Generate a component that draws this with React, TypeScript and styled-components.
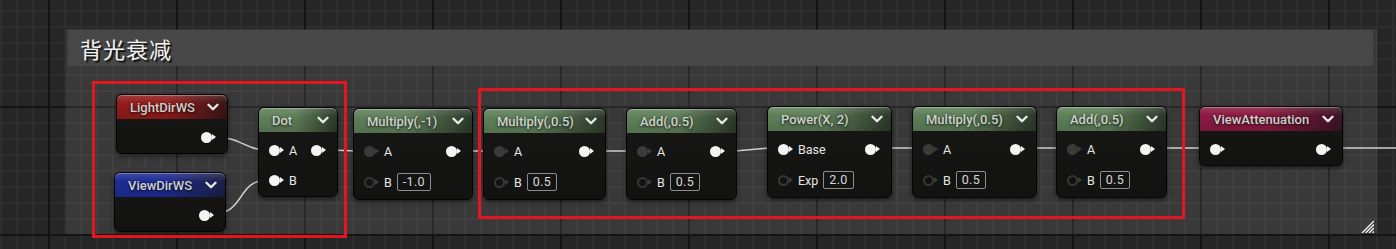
import React from 'react';
import styled, { createGlobalStyle } from 'styled-components';
import { ChevronDown } from 'lucide-react';

const GlobalStyle = createGlobalStyle`
  html, body {
    margin: 0;
    background: #262626;
    overflow: hidden;
  }
`;

type Tint = 'red' | 'blue' | 'green' | 'plum';
type PinKind = 'live' | 'dim' | 'empty';

const tints: Record<Tint, [string, string]> = {
  red: ['#931c1c', '#3a1515'],
  blue: ['#1f2d94', '#1b1f44'],
  green: ['#5f7f59', '#2b3829'],
  plum: ['#8c1a43', '#3a1422'],
};

const Canvas = styled.div`
  position: relative;
  width: 1396px;
  height: 249px;
  overflow: hidden;
  font-family: Roboto, 'Liberation Sans', sans-serif;
  background-color: #262626;
  background-image:
    linear-gradient(90deg, #141414 2px, transparent 2px),
    linear-gradient(180deg, #141414 2px, transparent 2px),
    linear-gradient(90deg, #2e2e2e 2px, transparent 2px),
    linear-gradient(180deg, #2e2e2e 2px, transparent 2px);
  background-size: 128px 100%, 100% 128px, 16px 100%, 100% 16px;
  background-position: 48px 0, 0 106px, 0 0, 0 10px;
`;

/* comment frame around the group of nodes */
const Comment = styled.div`
  position: absolute;
  left: 66px;
  top: 29px;
  width: 1311px;
  height: 205px;
  display: flex;
  flex-direction: column;
  background: rgba(255, 255, 255, 0.09);
`;

const CommentHeader = styled.div`
  height: 36px;
  margin: 1px 4px 0 2px;
  padding-left: 12px;
  display: flex;
  align-items: center;
  background: #474747;
  color: #f2f2f2;
  font-family: 'Noto Sans CJK SC', 'Noto Sans', sans-serif;
  font-size: 22px;
  letter-spacing: 1px;
  text-shadow: 2px 2px 1px rgba(0, 0, 0, 0.75);
`;

const Grip = styled.svg`
  margin-top: auto;
  margin-right: 3px;
  margin-bottom: 1px;
  align-self: flex-end;
`;

const Wires = styled.svg`
  position: absolute;
  left: 0;
  top: 0;
  pointer-events: none;
`;

const Node = styled.div<{ $x: number; $y: number; $w: number }>`
  position: absolute;
  left: ${p => p.$x}px;
  top: ${p => p.$y}px;
  width: ${p => p.$w}px;
  border-radius: 6px;
  border: 1px solid #050505;
  background: linear-gradient(180deg, #171816 0%, #121311 100%);
  box-shadow: 0 2px 5px rgba(0, 0, 0, 0.55);
  box-sizing: border-box;
`;

const NodeHeader = styled.div<{ $tint: Tint }>`
  height: 24px;
  display: flex;
  align-items: center;
  justify-content: space-between;
  padding: 0 5px 0 13px;
  border-radius: 5px 5px 0 0;
  background:
    linear-gradient(180deg, rgba(255, 255, 255, 0.14) 0%, rgba(255, 255, 255, 0) 35%, rgba(0, 0, 0, 0.12) 100%),
    linear-gradient(90deg, ${p => tints[p.$tint][0]} 0%, ${p => tints[p.$tint][0]} 45%, ${p => tints[p.$tint][1]} 100%);
  box-shadow: inset 0 1px 0 rgba(255, 255, 255, 0.3);
`;

const NodeTitle = styled.span`
  color: #ccd1cb;
  font-size: 13px;
  font-weight: 500;
  white-space: nowrap;
  text-shadow: 0 1px 3px rgba(0, 0, 0, 0.85);
`;

const NodeBody = styled.div`
  display: flex;
  flex-direction: column;
  gap: 10px;
  padding: 8px 0 6px;
`;

const PinRow = styled.div<{ $tall: boolean }>`
  height: ${p => (p.$tall ? 22 : 20)}px;
  display: flex;
  align-items: center;
  padding: 0 11px 0 10px;
`;

const Pin = styled.span<{ $out?: boolean }>`
  display: inline-flex;
  align-items: center;
  margin-left: ${p => (p.$out ? 'auto' : '0')};
`;

const pinColour = (k: PinKind) => (k === 'live' ? '#f4f4f4' : '#3b3b3b');

const PinDot = styled.span<{ $kind: PinKind }>`
  width: 11px;
  height: 11px;
  border-radius: 50%;
  box-sizing: border-box;
  background: ${p => (p.$kind === 'empty' ? '#121311' : pinColour(p.$kind))};
  border: ${p => (p.$kind === 'empty' ? '2px solid #363636' : 'none')};
`;

const PinArrow = styled.span<{ $kind: PinKind }>`
  width: 0;
  height: 0;
  border-top: 3px solid transparent;
  border-bottom: 3px solid transparent;
  border-left: 4px solid ${p => pinColour(p.$kind)};
`;

const PinLabel = styled.span`
  margin-left: 5px;
  color: #e6e6e6;
  font-size: 12.5px;
`;

const ValueBox = styled.span`
  margin-left: 5px;
  height: 18px;
  padding: 0 5px;
  box-sizing: border-box;
  border: 1px solid #8e8e8e;
  border-radius: 2px;
  color: #d8d8d8;
  font-size: 12.5px;
  line-height: 16px;
  letter-spacing: 0.3px;
`;

const Highlight = styled.div<{ $x: number; $y: number; $w: number; $h: number }>`
  position: absolute;
  left: ${p => p.$x}px;
  top: ${p => p.$y}px;
  width: ${p => p.$w}px;
  height: ${p => p.$h}px;
  border: 3px solid #e3161f;
  box-sizing: border-box;
`;

interface Row {
  pin?: PinKind;
  label?: string;
  value?: string;
  out?: boolean;
}

interface NodeData {
  title: string;
  tint: Tint;
  x: number;
  y: number;
  w: number;
  rows: Row[];
}

const binary = (b: string): Row[] => [
  { pin: 'dim', label: 'A', out: true },
  { pin: 'empty', label: 'B', value: b },
];

const nodes: NodeData[] = [
  { title: 'LightDirWS', tint: 'red', x: 116, y: 94, w: 112, rows: [{ out: true }] },
  { title: 'ViewDirWS', tint: 'blue', x: 114, y: 172, w: 112, rows: [{ out: true }] },
  {
    title: 'Dot', tint: 'green', x: 258, y: 107, w: 80,
    rows: [{ pin: 'live', label: 'A', out: true }, { pin: 'live', label: 'B' }],
  },
  { title: 'Multiply(,-1)', tint: 'green', x: 353, y: 108, w: 120, rows: binary('-1.0') },
  { title: 'Multiply(,0.5)', tint: 'green', x: 483, y: 108, w: 123, rows: binary('0.5') },
  { title: 'Add(,0.5)', tint: 'green', x: 626, y: 108, w: 111, rows: binary('0.5') },
  {
    title: 'Power(X, 2)', tint: 'green', x: 767, y: 106, w: 125,
    rows: [{ pin: 'live', label: 'Base', out: true }, { pin: 'empty', label: 'Exp', value: '2.0' }],
  },
  { title: 'Multiply(,0.5)', tint: 'green', x: 912, y: 106, w: 125, rows: binary('0.5') },
  { title: 'Add(,0.5)', tint: 'green', x: 1056, y: 106, w: 111, rows: binary('0.5') },
  { title: 'ViewAttenuation', tint: 'plum', x: 1199, y: 106, w: 144, rows: [{ pin: 'live', out: true }] },
];

const wires = [
  'M 214 137 C 242 137, 244 150, 268 150',
  'M 212 214 C 246 214, 236 180, 268 180',
  'M 324 150 C 345 150, 345 151, 366 151',
  'M 459 151 L 496 151',
  'M 592 151 L 638 151',
  'M 723 151 C 752 151, 752 148, 780 148',
  'M 877 148 L 925 148',
  'M 1021 148 L 1068 148',
  'M 1152 148 L 1212 148',
  'M 1329 148 L 1396 148',
];

const GraphNode: React.FC<{ node: NodeData }> = ({ node }) => (
  <Node $x={node.x} $y={node.y} $w={node.w}>
    <NodeHeader $tint={node.tint}>
      <NodeTitle>{node.title}</NodeTitle>
      <ChevronDown size={18} strokeWidth={3.2} color="#e8e8e8" />
    </NodeHeader>
    <NodeBody>
      {node.rows.map((row, i) => (
        <PinRow key={i} $tall={!!row.value}>
          {row.pin && (
            <Pin>
              <PinDot $kind={row.pin} />
              <PinArrow $kind={row.pin} />
            </Pin>
          )}
          {row.label && <PinLabel>{row.label}</PinLabel>}
          {row.value && <ValueBox>{row.value}</ValueBox>}
          {row.out && (
            <Pin $out>
              <PinDot $kind="live" />
              <PinArrow $kind="live" />
            </Pin>
          )}
        </PinRow>
      ))}
    </NodeBody>
  </Node>
);

const App: React.FC = () => (
  <>
    <GlobalStyle />
    <Canvas>
      <Comment>
        <CommentHeader>背光衰减</CommentHeader>
        <Grip width="13" height="13" viewBox="0 0 13 13">
          <g stroke="#ececec" strokeWidth="1.5">
            <line x1="13" y1="1" x2="1" y2="13" />
            <line x1="13" y1="4.5" x2="4.5" y2="13" />
            <line x1="13" y1="8" x2="8" y2="13" />
            <line x1="13" y1="11.5" x2="11.5" y2="13" />
          </g>
        </Grip>
      </Comment>

      <Wires width="1396" height="249" viewBox="0 0 1396 249">
        {wires.map((d, i) => (
          <path key={i} d={d} fill="none" stroke="#cfcfcf" strokeWidth="1.6" />
        ))}
      </Wires>

      {nodes.map((n, i) => (
        <GraphNode key={i} node={n} />
      ))}

      <Highlight $x={92} $y={81} $w={255} $h={157} />
      <Highlight $x={478} $y={88} $w={707} $h={131} />
    </Canvas>
  </>
);

export default App;
